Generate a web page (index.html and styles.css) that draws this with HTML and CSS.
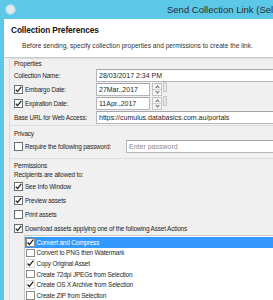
FILE: index.html
```html
<!DOCTYPE html>
<html lang="en">
<head>
    <meta charset="UTF-8">
    <title>Send Collection Link</title>
    <link rel="stylesheet" href="styles.css">
</head>
<body>
    <div class="window">
        <div class="titlebar">
            <svg class="app-icon" width="11" height="11" viewBox="0 0 11 11">
                <circle cx="5.5" cy="5.5" r="4.8" fill="#dfe9ee" stroke="#a9d6e8" stroke-width="1.2"/>
            </svg>
            <span class="title">Send Collection Link (Selection)</span>
        </div>

        <div class="header">
            <h1>Collection Preferences</h1>
            <p>Before sending, specify collection properties and permissions to create the link.</p>
        </div>

        <div class="panel">
            <!-- Properties -->
            <div class="group group-first">
                <div class="group-label">Properties</div>
                <div class="row">
                    <span class="field-label">Collection Name:</span>
                    <input class="text-input wide" type="text" value="28/03/2017 2:34 PM">
                </div>
                <div class="row">
                    <span class="field-label"><span class="check checked"></span>Embargo Date:</span>
                    <input class="text-input date" type="text" value="27Mar.,2017">
                    <span class="spinner"><span class="up"></span><span class="down"></span></span>
                    <span class="drop"></span>
                </div>
                <div class="row">
                    <span class="field-label"><span class="check checked"></span>Expiration Date:</span>
                    <input class="text-input date" type="text" value="11Apr.,2017">
                    <span class="spinner"><span class="up"></span><span class="down"></span></span>
                    <span class="drop"></span>
                </div>
                <div class="row">
                    <span class="field-label">Base URL for Web Access:</span>
                    <input class="text-input wide" type="text" value="https://cumulus.databasics.com.au/portals">
                </div>
            </div>

            <!-- Privacy -->
            <div class="group group-privacy">
                <div class="group-label">Privacy</div>
                <div class="row">
                    <span class="check"></span>
                    <span class="pw-label">Require the following password:</span>
                    <input class="text-input wide" type="text" placeholder="Enter password">
                </div>
            </div>

            <!-- Permissions -->
            <div class="group group-perms">
                <div class="group-label">Permissions</div>
                <div class="line">Recipients are allowed to:</div>
                <div class="row"><span class="check checked"></span>See Info Window</div>
                <div class="row"><span class="check checked"></span>Preview assets</div>
                <div class="row"><span class="check"></span>Print assets</div>
                <div class="row"><span class="check checked"></span>Download assets applying one of the following Asset Actions</div>

                <div class="action-list">
                    <div class="item selected"><span class="check checked"></span>Convert and Compress</div>
                    <div class="item"><span class="check"></span>Convert to PNG then Watermark</div>
                    <div class="item"><span class="check checked light"></span>Copy Original Asset</div>
                    <div class="item"><span class="check"></span>Create 72dpi JPEGs from Selection</div>
                    <div class="item"><span class="check checked light"></span>Create OS X Archive from Selection</div>
                    <div class="item"><span class="check"></span>Create ZIP from Selection</div>
                </div>
            </div>
        </div>
    </div>
</body>
</html>
```

FILE: styles.css
```css
body {
    margin: 0;
    font-family: "Liberation Sans", Arial, sans-serif;
    font-size: 6.4px;
    letter-spacing: -0.15px;
    color: #1e1e1e;
    background: #f0f0f0;
    overflow: hidden;
}
.window {
    width: 360px;
    height: 300px;
    border-left: 4px solid #5bc8e8;
    background: #f0f0f0;
}
.titlebar {
    height: 19px;
    background: #5bc8e8;
    display: flex;
    align-items: center;
}
.app-icon {
    margin-left: 1px;
    flex-shrink: 0;
}
.title {
    margin-left: 151px;
    font-size: 9.5px;
    letter-spacing: 0;
    color: #2b2b2b;
    white-space: nowrap;
}
.header {
    height: 38px;
    background: #fff;
    border-bottom: 1px solid #cccccc;
}
.header h1 {
    margin: 0;
    padding: 6px 0 0 7px;
    font-size: 8.3px;
    letter-spacing: -0.1px;
    line-height: 10px;
    font-weight: bold;
    color: #111;
}
.header p {
    margin: 6px 0 0 18px;
    font-size: 6.6px;
    letter-spacing: 0;
    line-height: 10px;
    color: #333;
}
.panel {
    padding-left: 5px;
}
.group {
    border-top: 1px solid #dcdcdc;
    border-left: 1px solid #dcdcdc;
    padding: 3px 0 4px 4px;
}
.group-first {
    padding-top: 0;
    padding-bottom: 1px;
}
.group-label {
    line-height: 9px;
    color: #222;
}
.row {
    height: 14px;
    display: flex;
    align-items: center;
    white-space: nowrap;
}
.group-privacy .row {
    height: 16px;
}
.group-perms {
    padding-top: 2px;
}
.line {
    line-height: 9px;
}
.field-label {
    width: 82px;
    flex-shrink: 0;
    display: flex;
    align-items: center;
}
.pw-label {
    width: 101px;
    flex-shrink: 0;
}
.text-input {
    box-sizing: border-box;
    height: 13px;
    padding: 0 2px;
    margin: 0;
    border: 1px solid #b5b7bd;
    border-top-color: #a3a5ab;
    background: #fff;
    font-family: inherit;
    font-size: 7px;
    letter-spacing: 0;
    color: #1e1e1e;
    outline: none;
}
.text-input::placeholder {
    color: #8a8a8a;
}
.wide {
    flex: 1;
    min-width: 0;
}
.date {
    width: 54px;
}
.spinner {
    box-sizing: border-box;
    width: 10px;
    height: 13px;
    margin-left: 2px;
    border: 1px solid #c3c3c3;
    background: #f6f6f6;
    display: flex;
    flex-direction: column;
}
.spinner span {
    flex: 1;
    position: relative;
}
.spinner .up {
    border-bottom: 1px solid #d0d0d0;
}
.spinner .up::after,
.spinner .down::after {
    content: "";
    position: absolute;
    left: 2.5px;
    width: 2px;
    height: 2px;
    border-left: 1px solid #666;
    border-top: 1px solid #666;
}
.spinner .up::after {
    top: 2px;
    transform: rotate(45deg);
}
.spinner .down::after {
    top: 0.5px;
    transform: rotate(225deg);
}
.drop {
    box-sizing: border-box;
    width: 4px;
    height: 10px;
    margin-left: 1px;
    align-self: flex-start;
    border: 1px solid #c9c9c9;
    background: #e6e6e6;
}
.check {
    box-sizing: border-box;
    width: 9px;
    height: 9px;
    margin-right: 2px;
    flex-shrink: 0;
    border: 1px solid #6e6e6e;
    background: #fff;
    display: inline-block;
}
.check.checked {
    background: #fff url("data:image/svg+xml,%3Csvg xmlns='http://www.w3.org/2000/svg' viewBox='0 0 7 7'%3E%3Cpath d='M0.8 3.6 L2.6 5.6 L6.3 0.9' fill='none' stroke='%23222' stroke-width='1.3'/%3E%3C/svg%3E") center / 7px 7px no-repeat;
}
.action-list {
    margin-left: 10px;
    border-top: 1px solid #c8c8c8;
    border-left: 1px solid #c8c8c8;
    background: #fff;
    padding-top: 1px;
}
.item {
    height: 10.6px;
    display: flex;
    align-items: center;
    padding-left: 1px;
    white-space: nowrap;
}
.item .check {
    width: 8.5px;
    height: 8.5px;
    margin-right: 2px;
    border-color: #8a8a8a;
}
.item .check.light {
    border-color: #dadada;
}
.item.selected {
    background: #3399ff;
    color: #fff;
}
```
